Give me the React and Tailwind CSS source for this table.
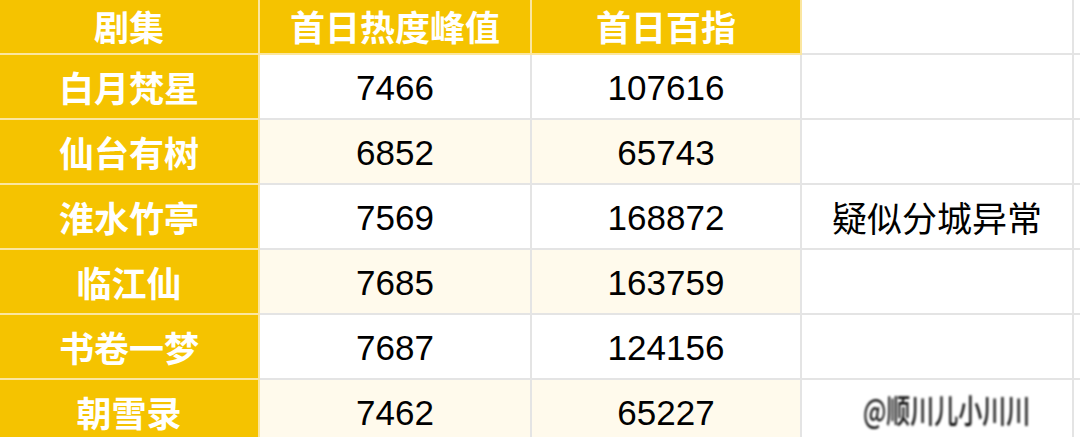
import React from "react";

const rows = [
  ["白月梵星", "7466", "107616", ""],
  ["仙台有树", "6852", "65743", ""],
  ["淮水竹亭", "7569", "168872", "疑似分城异常"],
  ["临江仙", "7685", "163759", ""],
  ["书卷一梦", "7687", "124156", ""],
  ["朝雪录", "7462", "65227", "wm"],
];

const cjk = "font-['Noto_Sans_CJK_SC','Noto_Sans',sans-serif]";
const num = "font-['Liberation_Sans',Arial,sans-serif]";
const yellowCell = `bg-[#f5c300] border-r-2 border-b-2 border-[#fbe6a0] flex items-center justify-center text-white font-bold text-[35px] leading-none ${cjk}`;

export default function App() {
  return (
    <div className="w-[1080px] h-[437px] overflow-hidden bg-white">
      <div className="grid grid-cols-[260px_272px_270px_272px_1fr]">
        <div className={`h-[55px] pb-[2px] ${yellowCell}`}>剧集</div>
        <div className={`h-[55px] pb-[2px] ${yellowCell}`}>首日热度峰值</div>
        <div className={`h-[55px] pb-[2px] ${yellowCell}`}>首日百指</div>
        <div className="h-[55px] bg-white border-r-2 border-b-2 border-[#e4e4e4]"></div>
        <div className="h-[55px] bg-white border-b-2 border-[#e4e4e4]"></div>
        {rows.map((r, i) => {
          const bg = i % 2 === 1 ? "bg-[#fffaec]" : "bg-white";
          return (
            <React.Fragment key={i}>
              <div className={`h-[65px] ${yellowCell}`}>{r[0]}</div>
              <div className={`h-[65px] ${bg} border-r-2 border-b-2 border-[#e4e4e4] flex items-center justify-center text-black text-[35px] leading-none pt-[2px] ${num}`}>{r[1]}</div>
              <div className={`h-[65px] ${bg} border-r-2 border-b-2 border-[#e4e4e4] flex items-center justify-center text-black text-[35px] leading-none pt-[2px] ${num}`}>{r[2]}</div>
              <div className={`h-[65px] bg-white border-r-2 border-b-2 border-[#e4e4e4] flex items-center justify-center text-black text-[35px] leading-none ${cjk}`}>
                {r[3] === "wm" ? (
                  <span className={`ml-[20px] mb-[6px] text-[30px] leading-none font-medium text-[#111] blur-[1.2px] scale-x-[0.8] scale-y-[1.1] whitespace-nowrap ${cjk}`}>@顺川儿小川川</span>
                ) : (
                  r[3]
                )}
              </div>
              <div className="h-[65px] bg-white border-b-2 border-[#e4e4e4]"></div>
            </React.Fragment>
          );
        })}
      </div>
    </div>
  );
}
